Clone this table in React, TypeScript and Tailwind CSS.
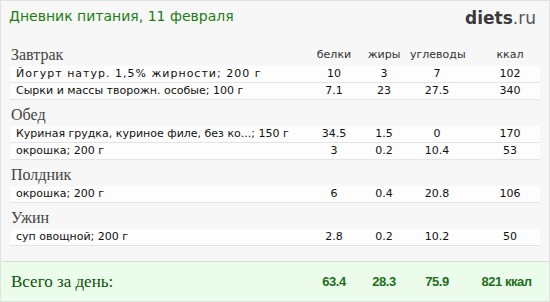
import React from "react";

type Item = { name: string; b: string; f: string; c: string; k: string; wide?: boolean };
type Meal = { title: string; items: Item[] };

const meals: Meal[] = [
  {
    title: "Завтрак",
    items: [
      { name: "Йогурт натур. 1,5% жирности; 200 г", b: "10", f: "3", c: "7", k: "102", wide: true },
      { name: "Сырки и массы творожн. особые; 100 г", b: "7.1", f: "23", c: "27.5", k: "340" },
    ],
  },
  {
    title: "Обед",
    items: [
      { name: "Куриная грудка, куриное филе, без ко...; 150 г", b: "34.5", f: "1.5", c: "0", k: "170" },
      { name: "окрошка; 200 г", b: "3", f: "0.2", c: "10.4", k: "53" },
    ],
  },
  {
    title: "Полдник",
    items: [{ name: "окрошка; 200 г", b: "6", f: "0.4", c: "20.8", k: "106" }],
  },
  {
    title: "Ужин",
    items: [{ name: "суп овощной; 200 г", b: "2.8", f: "0.2", c: "10.2", k: "50" }],
  },
];

const grid = "grid grid-cols-[300px_48px_52px_54px_73px]";
const sans = { fontFamily: '"DejaVu Sans", Verdana, sans-serif' };
const serif = { fontFamily: '"Liberation Serif", "Times New Roman", serif' };

export default function App() {
  return (
    <div className="w-[550px] h-[302px] bg-[#f7f7f7] border border-[#e2e2e2] flex flex-col overflow-hidden">
      <div className="h-[39px] flex justify-between items-start pl-[8px] pr-[13px] pt-[6px]">
        <div className="text-[14px] leading-[18px] text-[#1b7d12]" style={sans}>
          Дневник питания, 11 февраля
        </div>
        <div className="text-[17px] leading-[20px] pt-[1px]" style={sans}>
          <span className="font-bold text-[#3a3a3a]">diets</span>
          <span className="text-[#555]">.ru</span>
        </div>
      </div>
      <div className="px-[9px]">
        {meals.map((m, i) => (
          <div key={m.title}>
            <div className={`${grid} h-[26px] items-center`}>
              <div className="text-[16px] leading-[18px] text-[#444] pl-[1px] pt-[3px]" style={serif}>
                {m.title}
              </div>
              {i === 0 && (
                <>
                  <div className="text-center text-[11px] text-[#333] pt-[4px]" style={sans}>белки</div>
                  <div className="text-center text-[11px] text-[#333] pt-[4px]" style={sans}>жиры</div>
                  <div className="text-center text-[11px] text-[#333] pt-[4px]" style={sans}>углеводы</div>
                  <div className="text-center text-[11px] text-[#333] pt-[4px] pl-[19px]" style={sans}>ккал</div>
                </>
              )}
            </div>
            {m.items.map((it, j) => (
              <div
                key={j}
                className={`${grid} h-[17px] items-center bg-[#fdfdfd] border-b border-[#e4e4e4] text-[11px] text-[#111]`}
                style={sans}
              >
                <div className={`pl-[6px] whitespace-nowrap ${it.wide ? "tracking-[1px]" : ""}`}>{it.name}</div>
                <div className="text-center">{it.b}</div>
                <div className="text-center">{it.f}</div>
                <div className="text-center">{it.c}</div>
                <div className="text-center pl-[19px]">{it.k}</div>
              </div>
            ))}
          </div>
        ))}
      </div>
      <div className="mt-auto h-[40px] bg-[#ebfdea] border-t border-[#dcdcdc] px-[9px]">
        <div className={`${grid} h-full items-center`}>
          <div className="text-[17px] text-[#0d520d] pl-[1px]" style={serif}>
            Всего за день:
          </div>
          {["63.4", "28.3", "75.9"].map((v) => (
            <div
              key={v}
              className="text-center text-[13px] font-bold text-[#1e6e1e] tracking-[-0.5px]"
              style={{ fontFamily: '"Liberation Sans", Arial, sans-serif' }}
            >
              {v}
            </div>
          ))}
          <div
            className="text-center text-[13px] font-bold text-[#1e6e1e] tracking-[-0.5px] pl-[12px]"
            style={{ fontFamily: '"Liberation Sans", Arial, sans-serif' }}
          >
            821 ккал
          </div>
        </div>
      </div>
    </div>
  );
}
